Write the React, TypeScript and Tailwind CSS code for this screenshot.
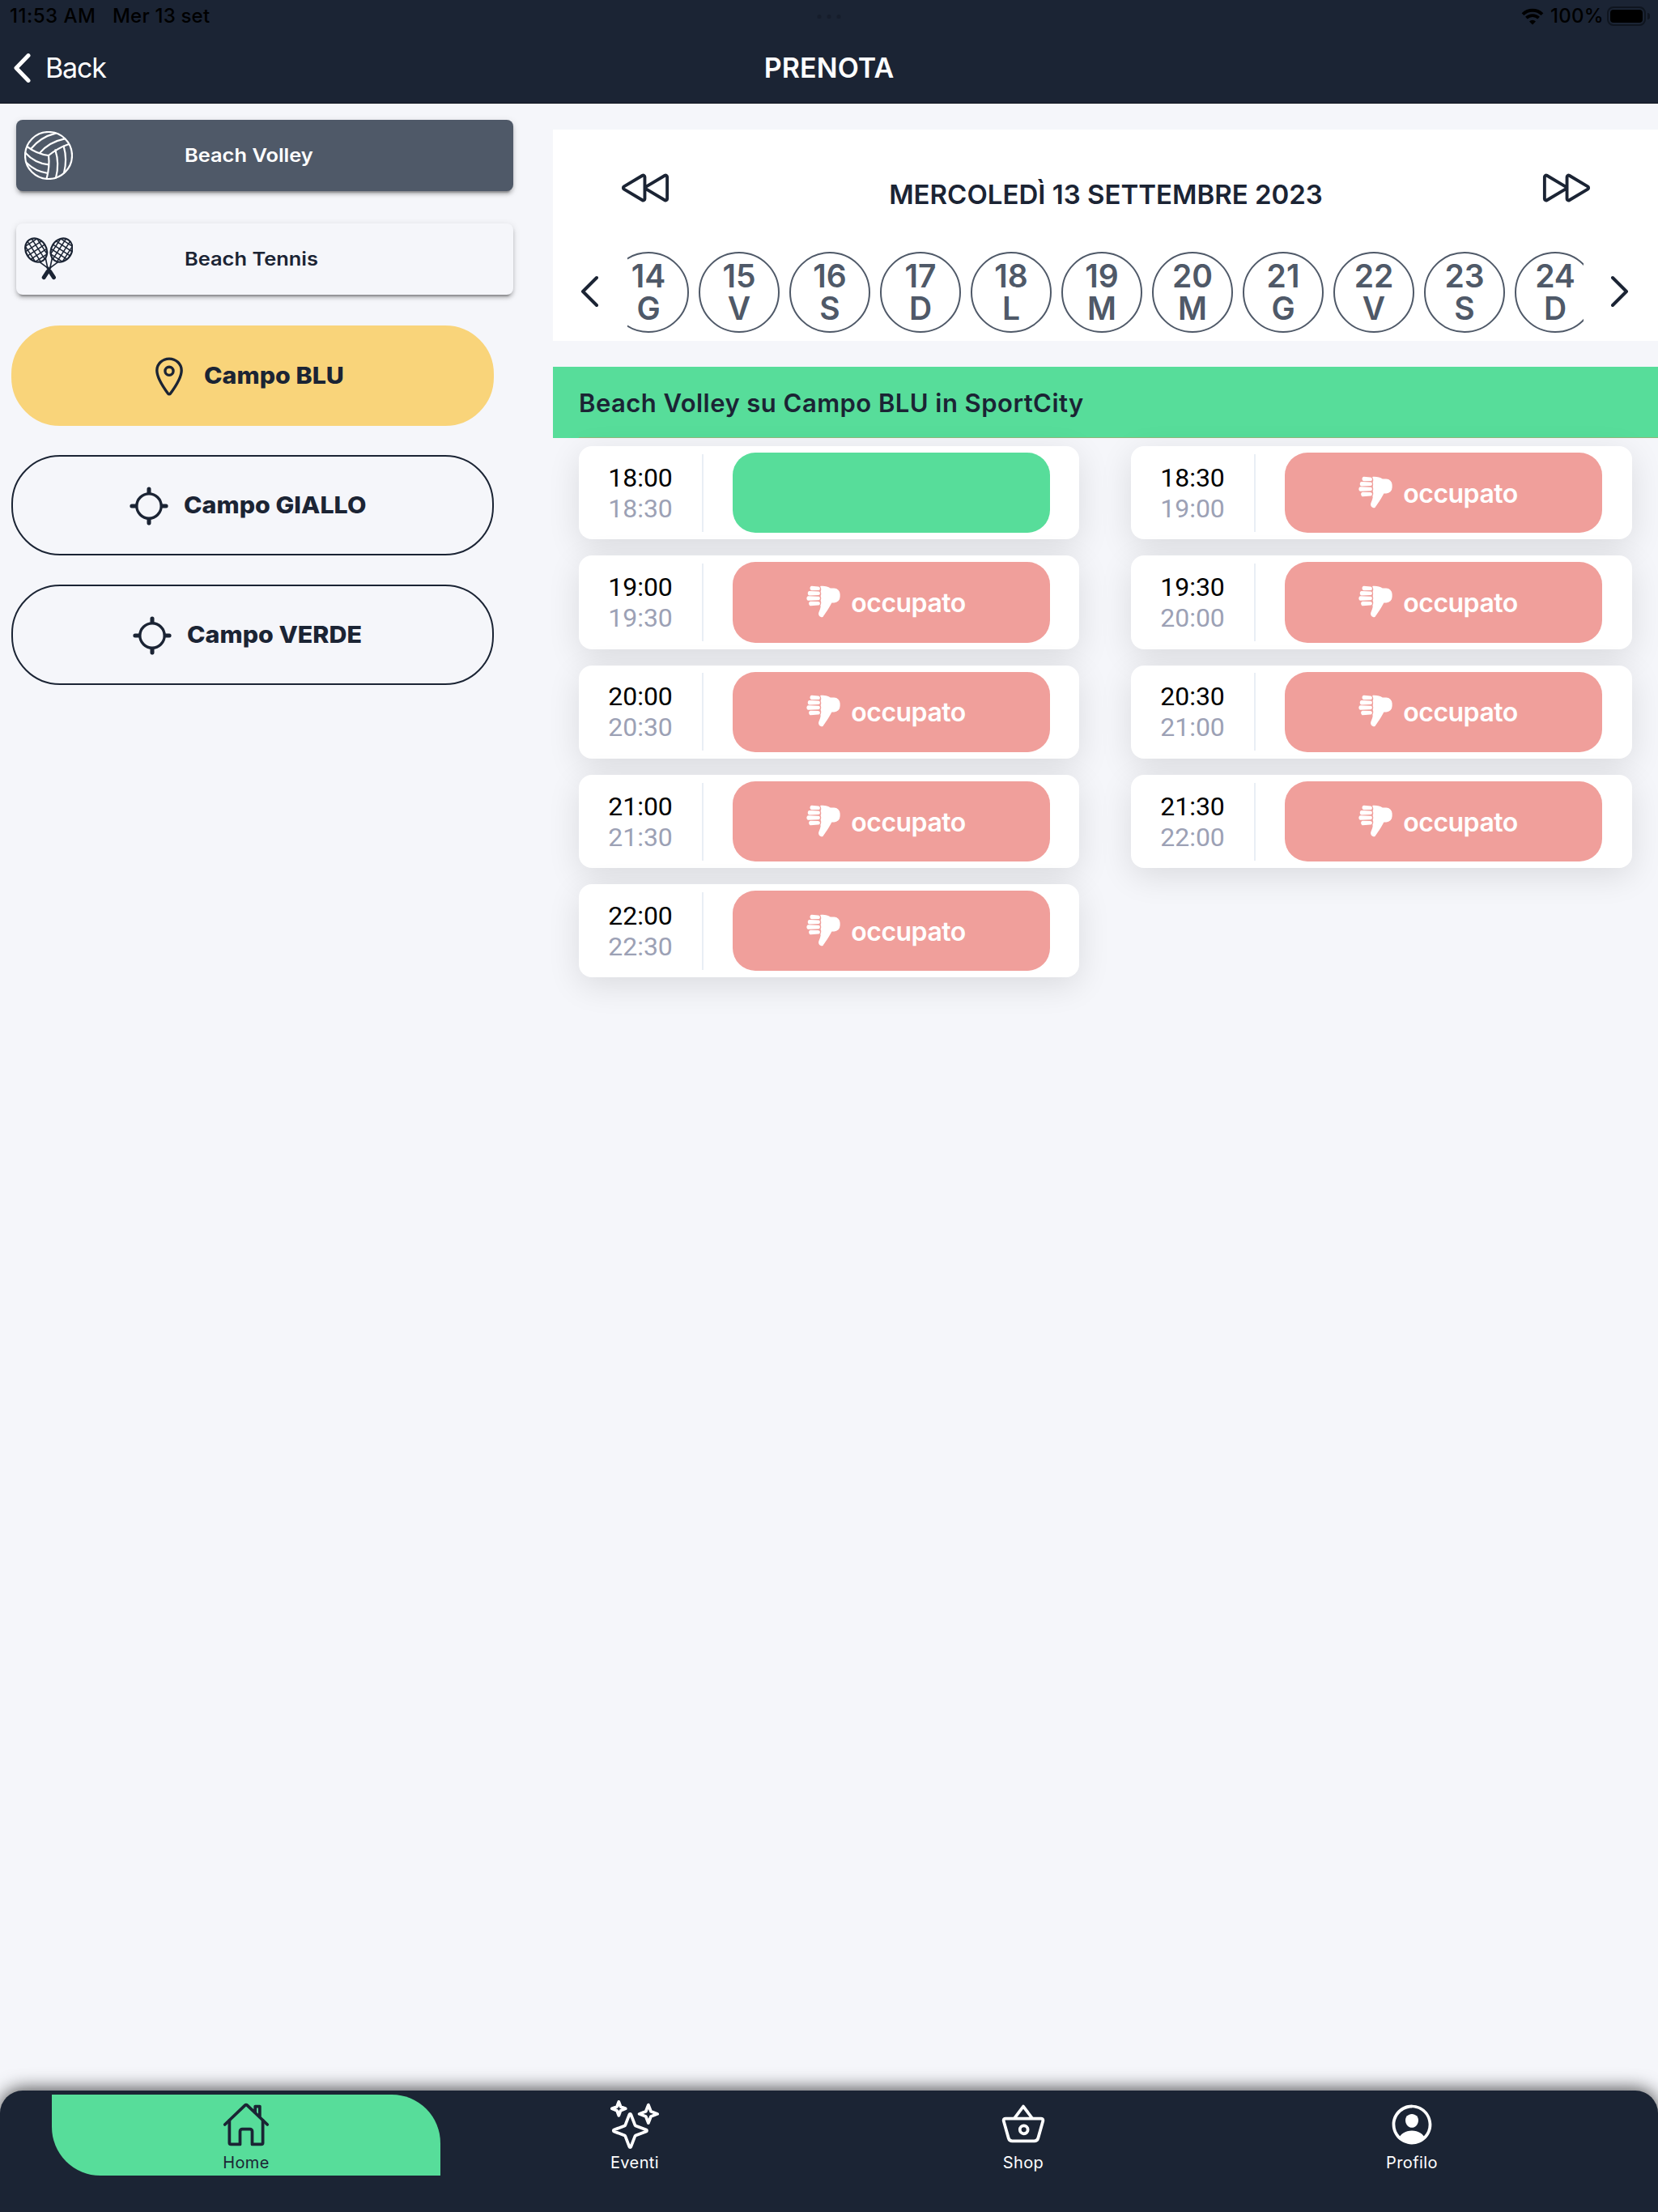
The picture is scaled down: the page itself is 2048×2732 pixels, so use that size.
import type { ReactNode } from 'react';
import {
  IoBasketOutline,
  IoHomeOutline,
  IoLocateOutline,
  IoLocationOutline,
  IoPersonCircleOutline,
  IoPlayBackOutline,
  IoPlayForwardOutline,
  IoSparklesOutline,
  IoThumbsDown,
} from 'react-icons/io5';

function StatusBar() {
  return (
    <div className="relative flex h-10 items-center justify-between pl-3 pr-[10px] text-[24px] font-medium leading-none text-black">
      <div className="flex items-center">
        <span className="w-[127px] tracking-[0.5px]">11:53 AM</span>
        <span className="tracking-[0.2px]">Mer 13 set</span>
      </div>
      <div className="absolute left-1/2 top-[18px] flex -translate-x-1/2 gap-[7px]">
        <i className="h-[5px] w-[5px] rounded-full bg-[#161d2b]" />
        <i className="h-[5px] w-[5px] rounded-full bg-[#161d2b]" />
        <i className="h-[5px] w-[5px] rounded-full bg-[#161d2b]" />
      </div>
      <div className="flex items-center">
        <svg width="28" height="21" viewBox="0 0 28 21">
          <path d="M2 7.6a17.3 17.3 0 0 1 24 0" fill="none" stroke="#000" strokeWidth="4" />
          <path d="M6.4 12.2a11 11 0 0 1 15.2 0" fill="none" stroke="#000" strokeWidth="3.8" />
          <path d="M14 20.6l-4-4.2a5.8 5.8 0 0 1 8 0z" />
        </svg>
        <span className="ml-2 w-[70px] tracking-[0.3px]">100%</span>
        <span className="flex h-6 w-12 rounded-[8px] border-2 border-[#0f151f] p-[2px]">
          <span className="h-full w-full rounded-[4px] bg-black" />
        </span>
        <span className="ml-[2px] h-2 w-[3px] rounded-r-full bg-[#0f151f]" />
      </div>
    </div>
  );
}

function Header() {
  return (
    <header className="h-32 shrink-0 border-b border-[#10161f] bg-[#1b2434]">
      <StatusBar />
      <div className="grid h-[87px] grid-cols-3 items-center text-[34px] leading-none text-white">
        <div className="flex items-center pl-[17px]">
          <svg width="21" height="36" viewBox="0 0 21 36" fill="none" stroke="#fff" strokeWidth="5" strokeLinecap="round" strokeLinejoin="round">
            <path d="M18 2.6L3 18l15 15.4" />
          </svg>
          <span className="ml-[18px] tracking-[-1.2px]">Back</span>
        </div>
        <h1 className="text-center font-semibold tracking-[0.1px]">PRENOTA</h1>
      </div>
    </header>
  );
}

function VolleyBall() {
  return (
    <svg width="60" height="60" viewBox="0 0 180 180" fill="none" stroke="#fff" strokeWidth="6.5" strokeLinecap="round">
      <circle cx="90" cy="90" r="87" />
      <path d="M12 58Q45 84 90 90Q125 62 165 48" />
      <path d="M90 90Q95 130 83 175" />
      <path d="M4 80Q38 118 90 124M9 118Q42 150 87 156" />
      <path d="M115 70Q131 120 117 173M146 56Q160 105 147 155" />
      <path d="M24 66Q60 22 116 8M58 80Q92 40 150 28" />
    </svg>
  );
}

function Racket() {
  return (
    <g>
      <g strokeWidth="4.5" clipPath="url(#racket-head)">
        <path d="M-40-34H40M-40-17H40M-40 0H40M-40 17H40M-40 34H40" />
        <path d="M-26-60V60M-9-60V60M9-60V60M26-60V60" />
      </g>
      <ellipse rx="38" ry="46" strokeWidth="6.5" />
      <path d="M-13 44L0 78M13 44L0 78" strokeWidth="5" />
      <path d="M0 78V92" strokeWidth="9" />
      <path d="M0 94V120" strokeWidth="15" />
    </g>
  );
}

function Rackets() {
  return (
    <svg width="60" height="60" viewBox="0 0 180 180" fill="none" stroke="#1b2434" strokeLinecap="round">
      <clipPath id="racket-head">
        <ellipse rx="37" ry="45" />
      </clipPath>
      <g transform="translate(44 57) rotate(-33)">
        <Racket />
      </g>
      <g transform="translate(138 57) rotate(33)">
        <Racket />
      </g>
    </svg>
  );
}

function SportButton({ icon, label, active }: { icon: ReactNode; label: string; active?: boolean }) {
  return (
    <button
      className={`flex h-[88px] w-[614px] items-center rounded-[8px] pl-[10px] shadow-[0_6px_2px_-4px_rgba(0,0,0,0.25),0_4px_4px_rgba(0,0,0,0.18),0_2px_10px_rgba(0,0,0,0.12)] ${
        active ? 'bg-[#4f5968] text-white' : 'bg-[#f5f6fa] text-[#1b2434]'
      }`}
    >
      {icon}
      <span className="ml-[138px] origin-left scale-x-[1.105] text-[23px] font-semibold leading-none">{label}</span>
    </button>
  );
}

function CourtButton({ label, width, active }: { label: string; width: string; active?: boolean }) {
  const Icon = active ? IoLocationOutline : IoLocateOutline;
  return (
    <button
      className={`flex h-[124px] w-[596px] items-center justify-center rounded-[60px] border-2 pt-[2px] text-[#1b2434] ${
        active ? 'border-[#f9d47a] bg-[#f9d47a]' : 'border-[#1b2434]'
      }`}
    >
      <Icon size={54} />
      <span className={`ml-4 mr-[18px] whitespace-nowrap text-left ${width}`}>
        <span className="inline-block origin-left scale-x-[1.085] text-[28px] font-extrabold leading-none">{label}</span>
      </span>
    </button>
  );
}

function Sidebar() {
  return (
    <aside className="w-[683px] shrink-0 pt-5">
      <div className="flex flex-col gap-10 pl-5">
        <SportButton icon={<VolleyBall />} label="Beach Volley" active />
        <SportButton icon={<Rackets />} label="Beach Tennis" />
      </div>
      <div className="mt-[38px] flex flex-col gap-9 pl-[14px]">
        <CourtButton label="Campo BLU" width="w-[173px]" active />
        <CourtButton label="Campo GIALLO" width="w-[223px]" />
        <CourtButton label="Campo VERDE" width="w-[215px]" />
      </div>
    </aside>
  );
}

const days = [
  ['14', 'G'],
  ['15', 'V'],
  ['16', 'S'],
  ['17', 'D'],
  ['18', 'L'],
  ['19', 'M'],
  ['20', 'M'],
  ['21', 'G'],
  ['22', 'V'],
  ['23', 'S'],
  ['24', 'D'],
];

function Chevron({ path }: { path: string }) {
  return (
    <svg width="22" height="40" viewBox="0 0 22 40" fill="none" stroke="#1b2434" strokeWidth="4" strokeLinecap="round" strokeLinejoin="round">
      <path d={path} />
    </svg>
  );
}

function Calendar() {
  return (
    <section className="mt-8 h-[261px] bg-white text-[#1b2434]">
      <div className="flex h-[151px] items-start justify-between pl-[83px] pr-[82px] pt-[41px]">
        <IoPlayBackOutline size={62} />
        <h2 className="mt-[19px] text-[33px] font-semibold leading-10">MERCOLEDÌ 13 SETTEMBRE 2023</h2>
        <IoPlayForwardOutline size={62} />
      </div>
      <div className="flex h-[100px] items-center">
        <div className="-mt-[2px] ml-[34px] w-[58px]">
          <Chevron path="M20 3L3 20l17 17" />
        </div>
        <div className="flex h-full w-[1181px] gap-3 overflow-hidden text-[39px] font-semibold leading-10 text-[#4f5968]">
          {days.map(([day, letter]) => (
            <div
              key={day}
              className="flex h-[100px] w-[100px] shrink-0 flex-col items-center justify-center rounded-full border-2 border-[#4f5968] first:-ml-6"
            >
              <span>{day}</span>
              <span>{letter}</span>
            </div>
          ))}
        </div>
        <div className="-mt-[2px] ml-[34px]">
          <Chevron path="M2 3l17 17L2 37" />
        </div>
      </div>
    </section>
  );
}

const slots = [
  { from: '18:00', to: '18:30', free: true },
  { from: '18:30', to: '19:00' },
  { from: '19:00', to: '19:30' },
  { from: '19:30', to: '20:00' },
  { from: '20:00', to: '20:30' },
  { from: '20:30', to: '21:00' },
  { from: '21:00', to: '21:30' },
  { from: '21:30', to: '22:00' },
  { from: '22:00', to: '22:30' },
];

function Slot({ from, to, free }: { from: string; to: string; free?: boolean }) {
  return (
    <div className="flex h-[115.3px] items-center rounded-[16px] bg-white shadow-[0_10px_40px_rgba(0,0,0,0.11)]">
      <div className="w-[152px] text-center font-[Roboto] text-[32px] leading-[38px]">
        <p className="text-black">{from}</p>
        <p className="text-[#9ca1b5]">{to}</p>
      </div>
      <div className="h-24 w-[2px] bg-[#e9eef5]" />
      {free ? (
        <div className="ml-9 h-[99.3px] w-[392px] rounded-[28px] bg-[#57dd9a]" />
      ) : (
        <div className="ml-9 flex h-[99.3px] w-[392px] items-center justify-center rounded-[28px] bg-[#f09f9b] text-white">
          <IoThumbsDown size={44} className="-mt-[2px]" />
          <span className="ml-3 mr-[14px] mt-[2px] text-[32px] font-semibold leading-none tracking-[-0.5px]">occupato</span>
        </div>
      )}
    </div>
  );
}

function Schedule() {
  return (
    <section className="mt-8">
      <h3 className="flex h-[88px] items-center bg-[#57dd9a] pl-8 text-[31px] font-semibold leading-none tracking-[0.46px] text-[#1b2434]">
        Beach Volley su Campo BLU in SportCity
      </h3>
      <div className="relative z-10 -mt-px ml-8 h-px bg-[#8fb77a]" />
      <div className="grid grid-cols-[618px_619px] gap-x-16 gap-y-5 pl-8 pt-[10px]">
        {slots.map((slot) => (
          <Slot key={slot.from} {...slot} />
        ))}
      </div>
    </section>
  );
}

const tabs = [
  { label: 'Home', Icon: IoHomeOutline, active: true },
  { label: 'Eventi', Icon: IoSparklesOutline },
  { label: 'Shop', Icon: IoBasketOutline },
  { label: 'Profilo', Icon: IoPersonCircleOutline },
];

function TabBar() {
  return (
    <nav className="flex h-[150px] shrink-0 items-start rounded-t-[28px] bg-[#1b2434] px-16 pt-[5px] shadow-[0_-2px_22px_rgba(0,0,0,0.7)]">
      {tabs.map(({ label, Icon, active }) => (
        <div
          key={label}
          className={`flex h-[100px] flex-1 flex-col items-center pt-[7px] ${
            active ? 'rounded-bl-[60px] rounded-tr-[60px] bg-[#57dd9a] text-[#1b2434]' : 'text-white'
          }`}
        >
          <Icon size={60} />
          <span className="mt-[5px] text-[20px] leading-6 tracking-[0.4px]">{label}</span>
        </div>
      ))}
    </nav>
  );
}

export default function App() {
  return (
    <div className="flex h-[2732px] w-[2048px] flex-col overflow-hidden bg-[#f5f6fa] font-[Inter,sans-serif]">
      <Header />
      <div className="flex flex-1">
        <Sidebar />
        <main className="flex-1">
          <Calendar />
          <Schedule />
        </main>
      </div>
      <TabBar />
    </div>
  );
}
